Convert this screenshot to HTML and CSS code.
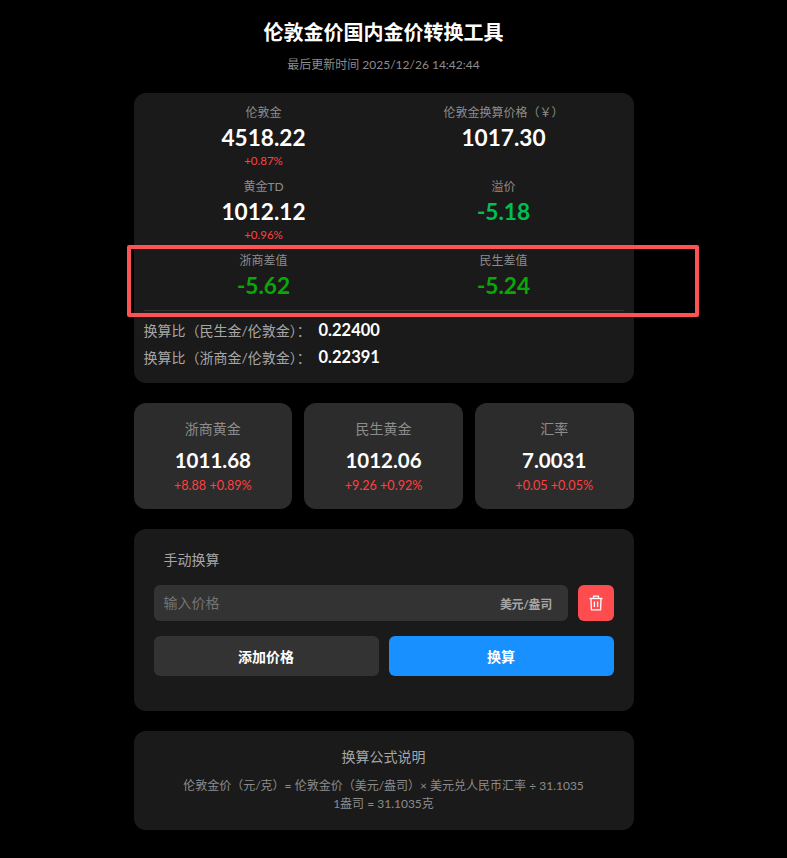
FILE: index.html
```html
<!DOCTYPE html>
<html lang="zh-CN">
<head>
<meta charset="utf-8">
<title>伦敦金价国内金价转换工具</title>
<link rel="stylesheet" href="styles.css">
</head>
<body>
<main class="page">
  <h1 class="title">伦敦金价国内金价转换工具</h1>
  <p class="updated">最后更新时间 2025/12/26 14:42:44</p>

  <section class="card summary">
    <div class="grid">
      <div class="cell"><div class="label">伦敦金</div><div class="value">4518.22</div><div class="change">+0.87%</div></div>
      <div class="cell"><div class="label">伦敦金换算价格（￥）</div><div class="value">1017.30</div></div>
      <div class="cell"><div class="label">黄金TD</div><div class="value">1012.12</div><div class="change">+0.96%</div></div>
      <div class="cell"><div class="label">溢价</div><div class="value premium">-5.18</div></div>
      <div class="cell"><div class="label">浙商差值</div><div class="value spread">-5.62</div></div>
      <div class="cell"><div class="label">民生差值</div><div class="value spread">-5.24</div></div>
    </div>
    <div class="ratios">
      <div class="ratio"><span class="ratio-label">换算比（民生金/伦敦金）：</span><span class="ratio-value">0.22400</span></div>
      <div class="ratio"><span class="ratio-label">换算比（浙商金/伦敦金）：</span><span class="ratio-value">0.22391</span></div>
    </div>
  </section>

  <section class="tiles">
    <div class="tile"><div class="tile-label">浙商黄金</div><div class="tile-value">1011.68</div><div class="tile-change">+8.88 +0.89%</div></div>
    <div class="tile"><div class="tile-label">民生黄金</div><div class="tile-value">1012.06</div><div class="tile-change">+9.26 +0.92%</div></div>
    <div class="tile"><div class="tile-label">汇率</div><div class="tile-value">7.0031</div><div class="tile-change">+0.05 +0.05%</div></div>
  </section>

  <section class="card manual">
    <div class="manual-title">手动换算</div>
    <div class="input-row">
      <div class="input"><span class="placeholder">输入价格</span><span class="unit">美元/盎司</span></div>
      <button class="trash" type="button" aria-label="删除">
        <svg width="16" height="16" viewBox="0 0 16 16" fill="none" stroke="#fff" stroke-width="1.3" stroke-linejoin="round">
          <path d="M1.5 3.5h13"/>
          <path d="M5.5 3.5V1.2h5v2.3"/>
          <path d="M3 3.5l.4 11.3h9.2L13 3.5"/>
          <path d="M6.4 6.5v5.5M9.6 6.5v5.5"/>
        </svg>
      </button>
    </div>
    <div class="actions">
      <button class="btn btn-dark" type="button">添加价格</button>
      <button class="btn btn-blue" type="button">换算</button>
    </div>
  </section>

  <section class="card formula">
    <div class="formula-title">换算公式说明</div>
    <div class="formula-text">伦敦金价（元/克）= 伦敦金价（美元/盎司）× 美元兑人民币汇率 ÷ 31.1035</div>
    <div class="formula-text">1盎司 = 31.1035克</div>
  </section>
</main>
<div class="highlight"></div>
</body>
</html>
```
FILE: styles.css
```css
* { box-sizing: border-box; }
html, body { margin: 0; background: #000; }
body {
  color: #fff;
  font-family: Lato, "Noto Sans CJK SC", sans-serif;
  height: 858px;
  overflow: hidden;
  position: relative;
  padding-right: 20px;
}
.page { width: 500px; margin: 0 auto; padding-top: 18px; }
.title { margin: 0; font-size: 20px; line-height: 29px; font-weight: 700; text-align: center; }
.updated { margin: 8px 0 18px; font-size: 12px; line-height: 20px; color: #8c8c8c; text-align: center; }
.card { background: #1a1a1a; border-radius: 12px; }
.summary { height: 290px; padding: 10px; }
.grid { display: grid; grid-template-columns: 1fr 1fr; grid-template-rows: 74px 74px 59px; border-bottom: 1px solid #333; }
.cell { text-align: center; }
.label { font-size: 12px; line-height: 20px; color: #8c8c8c; }
.value { font-size: 22.6px; line-height: 30px; font-weight: 700; }
.change { font-size: 11.5px; line-height: 16px; color: #ff4040; }
.premium { color: #00c050; }
.spread { color: #08a808; }
.ratios { padding-top: 5px; }
.ratio { display: flex; height: 27px; align-items: center; }
.ratio-label { width: 175px; font-size: 14px; color: #a6a6a6; }
.ratio-value { font-size: 16.5px; font-weight: 700; }
.tiles { display: flex; gap: 12px; margin-top: 20px; }
.tile { flex: 1; height: 106px; background: #2c2c2c; border-radius: 12px; padding-top: 14px; text-align: center; }
.tile-label { font-size: 14px; line-height: 24px; color: #8c8c8c; }
.tile-value { font-size: 20.5px; line-height: 30px; font-weight: 700; margin: 4px 0 3px; }
.tile-change { font-size: 12.6px; line-height: 16px; color: #ff4040; }
.manual { margin-top: 20px; height: 182px; padding: 20px; }
.manual-title { font-size: 14px; line-height: 22px; color: #a6a6a6; padding-left: 10px; margin-bottom: 14px; }
.input-row { display: flex; gap: 10px; }
.input { flex: 1; height: 36px; background: #333; border-radius: 6px; padding: 0 15.5px 0 10px; display: flex; align-items: center; justify-content: space-between; }
.placeholder { font-size: 14px; color: #757575; padding-bottom: 2px; }
.unit { font-size: 12px; font-weight: 700; color: #a6a6a6; letter-spacing: -0.3px; }
.trash { width: 36px; height: 36px; border: 0; border-radius: 6px; background: #ff4d4f; padding: 0; display: flex; align-items: center; justify-content: center; }
.actions { display: flex; gap: 10px; margin-top: 15px; }
.btn { flex: 1; height: 40px; border: 0; border-radius: 6px; color: #fff; font: 700 14px Lato, "Noto Sans CJK SC", sans-serif; }
.btn-dark { background: #333; }
.btn-blue { background: #1890ff; }
.formula { margin-top: 20px; height: 99px; padding-top: 14px; text-align: center; }
.formula-title { font-size: 14px; line-height: 24px; color: #a6a6a6; margin-bottom: 8px; }
.formula-text { font-size: 12px; line-height: 18px; color: #8c8c8c; }
.highlight { position: absolute; left: 127px; top: 245px; width: 572px; height: 72px; border: 4px solid #ff5252; border-radius: 2px; }
```
